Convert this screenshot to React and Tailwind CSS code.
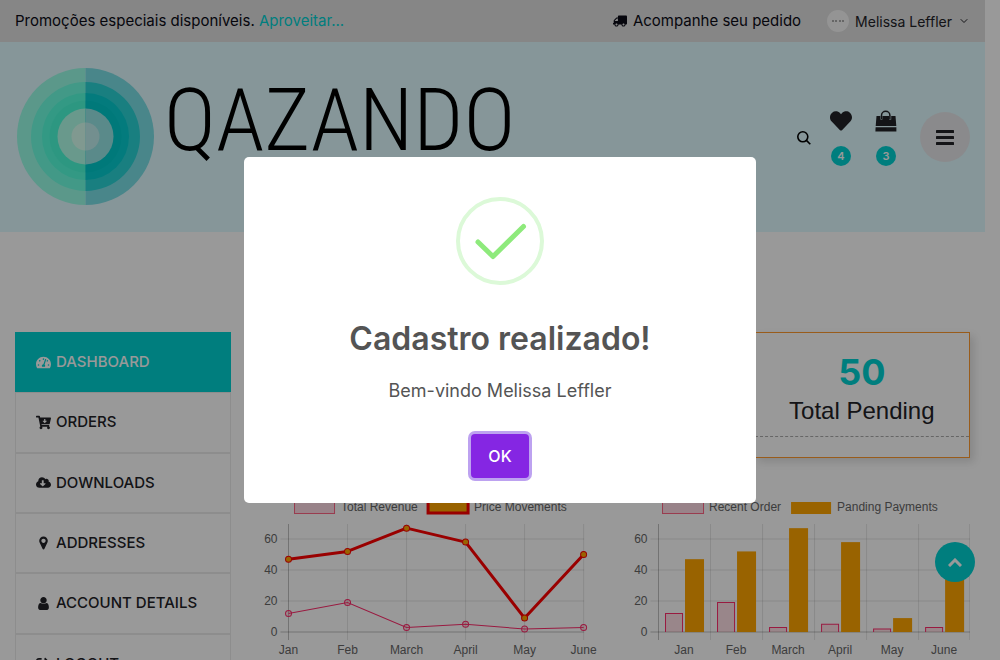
import React from "react";
import {
  FaTruck,
  FaHeart,
  FaTachometerAlt,
  FaCartArrowDown,
  FaCloudDownloadAlt,
  FaSignOutAlt,
} from "react-icons/fa";
import { ChevronDown } from "lucide-react";

const MONTHS = ["Jan", "Feb", "March", "April", "May", "June"];
const LOW = [12, 19, 3, 5, 2, 3];
const HIGH = [47, 52, 67, 58, 9, 50];
const TICKS = [0, 20, 40, 60];
const yOf = (v) => 144 - v * 1.55;

function RingLogo() {
  const rings = [
    [68.5, "#98fde6", "#7bdfe6"],
    [54.5, "#6effe2", "#2ad4d6"],
    [43.5, "#55ffdc", "#06ced0"],
    [36, "#4cfcd8", "#00cacc"],
    [28, "#afffe9", "#96e6e6"],
    [14, "#d5fff0", "#c0eeee"],
  ];
  return (
    <svg width="137" height="137" viewBox="-68.5 -68.5 137 137" aria-hidden="true">
      {rings.map(([r, left, right]) => (
        <g key={r}>
          <path d={`M0 ${-r}A${r} ${r} 0 0 0 0 ${r}Z`} fill={left} />
          <path d={`M0 ${-r}A${r} ${r} 0 0 1 0 ${r}Z`} fill={right} />
        </g>
      ))}
    </svg>
  );
}

function BagIcon() {
  return (
    <svg width="22" height="22" viewBox="0 0 22 22" aria-hidden="true">
      <path d="M6.5 9V5.5a4.2 4.2 0 0 1 8.4 0V9" fill="none" stroke="currentColor" strokeWidth="1.5" />
      <path d="M1.5 6H5.4v3.5h2V6h6.8v3.5h2V6h4.3L21.3 16H.7Z" fill="currentColor" />
      <path d="M.6 17.2H21.4V21.5H.4Z" fill="currentColor" />
    </svg>
  );
}

function PinIcon({ size }) {
  return (
    <svg width={size} height={size} viewBox="-384 64 1792 1792" fill="currentColor" aria-hidden="true">
      <path d="M768 640q0-106-75-181t-181-75-181 75-75 181 75 181 181 75 181-75 75-181zm256 0q0 109-33 179l-364 774q-16 33-47.500 52t-67.500 19-67.500-19-46.500-52l-365-774q-33-70-33-179 0-212 150-362t362-150 362 150 150 362z" />
    </svg>
  );
}

function PersonIcon({ size }) {
  return (
    <svg width={size} height={size} viewBox="0 0 1792 1792" fill="currentColor" aria-hidden="true">
      <path d="M1536 1399q0 109-62.500 187t-150.500 78h-854q-88 0-150.500-78t-62.500-187q0-85 8.500-160.500t31.500-152 58.500-131 94-89 134.500-34.500q131 128 313 128t313-128q76 0 134.500 34.500t94 89 58.500 131 31.500 152 8.500 160.500zm-256-887q0 159-112.500 271.500t-271.500 112.500-271.500-112.500-112.500-271.500 112.500-271.500 271.500-112.500 271.500 112.500 112.500 271.500z" />
    </svg>
  );
}

function IconLink({ label, count, children }) {
  return (
    <a href="#" aria-label={label} className="flex flex-col items-center gap-3.5 pt-0.5 text-[#222227]">
      <span className="flex h-[22px] w-[22px] items-center justify-center">{children}</span>
      <span className="flex h-5 w-5 items-center justify-center rounded-full bg-[#00d2d3] text-[11px] font-semibold text-white">
        {count}
      </span>
    </a>
  );
}

const MENU = [
  ["DASHBOARD", FaTachometerAlt],
  ["ORDERS", FaCartArrowDown],
  ["DOWNLOADS", FaCloudDownloadAlt],
  ["ADDRESSES", PinIcon],
  ["ACCOUNT DETAILS", PersonIcon],
  ["LOGOUT", FaSignOutAlt],
];

function Grid({ x0, x1, verticals, labels }) {
  return (
    <g>
      {TICKS.map((t) => (
        <g key={t}>
          <path
            d={`M${x0 - 8} ${yOf(t)}H${x1}`}
            stroke="#000"
            strokeOpacity={t === 0 ? 0.25 : 0.1}
          />
          <text x={x0 - 11} y={yOf(t) + 4} textAnchor="end">
            {t}
          </text>
        </g>
      ))}
      {verticals.map((x, i) => (
        <path key={x} d={`M${x} 36V152`} stroke="#000" strokeOpacity={i === 0 ? 0.25 : 0.1} />
      ))}
      {MONTHS.map((m, i) => (
        <text key={m} x={labels[i]} y="166" textAnchor="middle">
          {m}
        </text>
      ))}
    </g>
  );
}

const CHART = "block w-full fill-[#666] font-['Liberation_Sans',sans-serif] text-[12px]";

function LineChart() {
  const xs = [27.5, 86.5, 145.5, 204.5, 263.5, 322.5];
  const pts = (data) => data.map((v, i) => `${xs[i]},${yOf(v)}`).join(" ");
  return (
    <svg viewBox="0 0 339 172" className={CHART} role="img" aria-label="Total Revenue and Price Movements">
      <rect x="33.5" y="13.5" width="40" height="12" fill="#ffdae4" stroke="#ff6384" />
      <text x="80" y="23">Total Revenue</text>
      <rect x="167" y="13" width="40" height="12" fill="#ffa500" stroke="#ff0000" strokeWidth="3" />
      <text x="213" y="23">Price Movements</text>
      <Grid x0={27.5} x1={323} verticals={xs} labels={xs} />
      <polyline points={pts(LOW)} fill="none" stroke="#ff2c6c" strokeWidth="1" />
      <polyline points={pts(HIGH)} fill="none" stroke="#ff0000" strokeWidth="3" strokeLinejoin="round" />
      {xs.map((x, i) => (
        <g key={x}>
          <circle cx={x} cy={yOf(LOW[i])} r="3" fill="#ff6384" fillOpacity="0.2" stroke="#ff2c6c" />
          <circle cx={x} cy={yOf(HIGH[i])} r="3" fill="#ffa500" stroke="#ff0000" />
        </g>
      ))}
    </svg>
  );
}

function BarChart() {
  const edges = [27.5, 79.5, 131.5, 183.5, 235.5, 287.5, 338.5];
  const mids = MONTHS.map((_, i) => 53 + i * 52);
  return (
    <svg viewBox="0 0 339 172" className={CHART} role="img" aria-label="Recent Order and Panding Payments">
      <rect x="31.5" y="13.5" width="41" height="12" fill="#ffdae4" stroke="#ff6384" />
      <text x="78" y="23">Recent Order</text>
      <rect x="160" y="14" width="40" height="12" fill="#ffa500" />
      <text x="206" y="23">Panding Payments</text>
      <Grid x0={27.5} x1={339} verticals={edges} labels={mids} />
      {mids.map((x, i) => (
        <g key={x}>
          <path
            d={`M${x - 18.5} 144V${yOf(LOW[i])}H${x - 1.5}V144`}
            fill="#ff6384"
            fillOpacity="0.2"
            stroke="#ff2c6c"
          />
          <rect x={x + 1} y={yOf(HIGH[i])} width="19" height={144 - yOf(HIGH[i])} fill="#ffa500" />
        </g>
      ))}
    </svg>
  );
}

function SuccessDialog() {
  return (
    <div className="fixed inset-0 z-50 flex items-center justify-center bg-black/40">
      <div
        role="dialog"
        aria-modal="true"
        aria-labelledby="dialog-title"
        className="flex w-[512px] max-w-full flex-col items-center rounded-[5px] bg-white px-5 pt-10 pb-[25px] text-[#545454]"
      >
        <svg width="88" height="88" viewBox="0 0 88 88" aria-hidden="true">
          <circle cx="44" cy="44" r="42" fill="none" stroke="#dcf9d8" strokeWidth="4" />
          <path
            d="M22 45L37 59.5L67.5 29.5"
            fill="none"
            stroke="#8eea7c"
            strokeWidth="5"
            strokeLinecap="round"
            strokeLinejoin="round"
          />
        </svg>
        <h2 id="dialog-title" className="mt-[34px] text-[32px] leading-10 font-semibold">
          Cadastro realizado!
        </h2>
        <p className="mt-5 text-[18px] leading-6">Bem-vindo Melissa Leffler</p>
        <button
          type="button"
          className="mt-[31px] h-11 rounded-[4px] bg-[#8526e3] px-[17px] text-[16px] font-medium text-white ring-[3px] ring-[#bda2f0]"
        >
          OK
        </button>
      </div>
    </div>
  );
}

export default function App() {
  return (
    <div className="h-screen overflow-hidden bg-white pr-[15px] font-['Inter',sans-serif] text-[#222227]">
      <div className="flex h-[42px] items-center justify-between bg-[#dfdfdf] px-[15px] text-[15px]">
        <p className="text-[#0b0b16]">
          Promoções especiais disponíveis.{" "}
          <a href="#" className="text-[#00d2d3]">
            Aproveitar...
          </a>
        </p>
        <div className="flex items-center gap-[26px]">
          <a href="#" className="flex items-center gap-1.5 text-[#0b0b16]">
            <FaTruck className="-scale-x-100" size={14} />
            Acompanhe seu pedido
          </a>
          <button type="button" className="flex items-center gap-1.5 text-[14px]">
            <span className="flex h-[22px] w-[22px] items-center justify-center rounded-full bg-[#f7f7f7]">
              <span className="w-3 border-t-2 border-dotted border-[#aaa]" />
            </span>
            Melissa Leffler
            <ChevronDown size={12} strokeWidth={2} />
          </button>
        </div>
      </div>

      <header className="flex h-[190px] items-center justify-between bg-[#dffaff] pr-[15px] pl-[17px]">
        <a href="#" className="mb-0.5 flex items-center gap-2.5 text-black">
          <RingLogo />
          <span className="-mt-8 font-['Roboto_Condensed','Roboto',sans-serif] text-[88px] leading-none font-light">
            QAZANDO
          </span>
        </a>
        <div className="flex items-center gap-[23px]">
          <button type="button" aria-label="Buscar" className="-mr-1 pt-0.5">
            <svg width="14" height="14" viewBox="0 0 14 14" fill="none" stroke="#000" strokeWidth="1.6" aria-hidden="true">
              <circle cx="5.8" cy="5.8" r="5" />
              <path d="M9.4 9.4L13.3 13.3" />
            </svg>
          </button>
          <IconLink label="Favoritos" count="4">
            <FaHeart size={22} />
          </IconLink>
          <IconLink label="Carrinho" count="3">
            <BagIcon />
          </IconLink>
          <button
            type="button"
            aria-label="Menu"
            className="flex h-[50px] w-[50px] items-center justify-center rounded-full bg-[#e6e7ea]"
          >
            <svg width="18" height="15" viewBox="0 0 18 15" fill="currentColor" aria-hidden="true">
              <rect width="18" height="3" rx="0.6" />
              <rect y="6" width="18" height="3" rx="0.6" />
              <rect y="12" width="18" height="3" rx="0.6" />
            </svg>
          </button>
        </div>
      </header>

      <main className="grid grid-cols-4 items-start px-[15px] pt-[100px]">
        <nav className="mr-[23px]">
          <ul className="grid h-[362px] auto-rows-fr">
            {MENU.map(([label, Icon], i) => (
              <li key={label}>
                <a
                  href="#"
                  className={
                    i === 0
                      ? "flex h-full items-center gap-[5px] bg-[#00d2d3] px-[21px] text-[15px] font-medium text-white"
                      : "flex h-full items-center gap-[5px] border border-[#ebebeb] px-5 text-[15px] font-medium"
                  }
                >
                  <Icon size={15} />
                  {label}
                </a>
              </li>
            ))}
          </ul>
        </nav>
        <div className="col-span-3 ml-[7px]">
          <div className="grid grid-cols-3 gap-[30px]">
            <section className="col-start-3 h-[126px] border border-[#ff9a2e] pt-[18px] text-center shadow-[4px_4px_8px_rgba(0,0,0,0.12)]">
              <h3 className="text-[36px] leading-[42px] font-bold text-[#00d2d3]">50</h3>
              <p className="border-b border-dashed border-[#aaa] pb-[7px] font-['Liberation_Sans',sans-serif] text-[24px] leading-9">
                Total Pending
              </p>
            </section>
          </div>
          <div className="mt-[30px] grid grid-cols-2 gap-[31px]">
            <LineChart />
            <BarChart />
          </div>
        </div>
      </main>

      <button
        type="button"
        aria-label="Voltar ao topo"
        className="fixed right-[25px] bottom-[78px] flex h-10 w-10 items-center justify-center rounded-full bg-[#00d2d3] text-white"
      >
        <svg width="14" height="9" viewBox="0 0 14 9" fill="none" stroke="currentColor" strokeWidth="3" aria-hidden="true">
          <path d="M1 8L7 2L13 8" />
        </svg>
      </button>

      <SuccessDialog />
    </div>
  );
}
